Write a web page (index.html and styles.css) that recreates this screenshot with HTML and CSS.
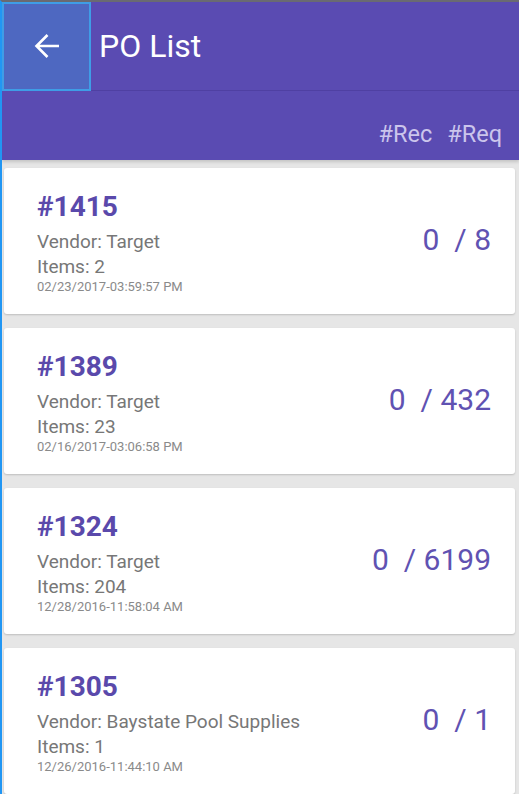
FILE: index.html
```html
<!DOCTYPE html>
<html lang="en">
<head>
    <meta charset="UTF-8">
    <meta name="viewport" content="width=device-width, initial-scale=1.0">
    <title>PO List</title>
    <link rel="stylesheet" href="styles.css">
</head>
<body>
    <header class="appbar">
        <div class="toolbar">
            <button class="back-btn" aria-label="Back">
                <svg width="26" height="26" viewBox="0 0 26 26">
                    <path d="M25 13H2.5M13.5 2L2.5 13l11 11" fill="none" stroke="#fff" stroke-width="2.6"/>
                </svg>
            </button>
            <h1 class="title">PO List</h1>
        </div>
        <div class="columns">
            <span>#Rec</span>
            <span>#Req</span>
        </div>
    </header>

    <main class="po-list">
        <div class="po-card">
            <div class="po-info">
                <div class="po-num">#1415</div>
                <div class="po-line">Vendor: Target</div>
                <div class="po-line">Items: 2</div>
                <div class="po-date">02/23/2017-03:59:57 PM</div>
            </div>
            <div class="po-count">0 &nbsp;/ 8</div>
        </div>
        <div class="po-card">
            <div class="po-info">
                <div class="po-num">#1389</div>
                <div class="po-line">Vendor: Target</div>
                <div class="po-line">Items: 23</div>
                <div class="po-date">02/16/2017-03:06:58 PM</div>
            </div>
            <div class="po-count">0 &nbsp;/ 432</div>
        </div>
        <div class="po-card">
            <div class="po-info">
                <div class="po-num">#1324</div>
                <div class="po-line">Vendor: Target</div>
                <div class="po-line">Items: 204</div>
                <div class="po-date">12/28/2016-11:58:04 AM</div>
            </div>
            <div class="po-count">0 &nbsp;/ 6199</div>
        </div>
        <div class="po-card">
            <div class="po-info">
                <div class="po-num">#1305</div>
                <div class="po-line">Vendor: Baystate Pool Supplies</div>
                <div class="po-line">Items: 1</div>
                <div class="po-date">12/26/2016-11:44:10 AM</div>
            </div>
            <div class="po-count">0 &nbsp;/ 1</div>
        </div>
    </main>
</body>
</html>
```

FILE: styles.css
```css
html, body {
    height: 100%;
}
body {
    margin: 0;
    font-family: Roboto, "Liberation Sans", sans-serif;
    background-color: #e6e6e6;
    border-left: 2px solid #2196f3;
    border-top: 2px solid #6a6a72;
    box-sizing: border-box;
    overflow: hidden;
}
.appbar {
    background-color: #5a4bb2;
}
.toolbar {
    display: flex;
    align-items: center;
    height: 89px;
    border-bottom: 1px solid #5041a4;
    box-sizing: border-box;
}
.back-btn {
    width: 89px;
    height: 89px;
    margin: 0;
    padding: 0;
    display: flex;
    align-items: center;
    justify-content: center;
    background-color: #4e68c1;
    border: 2px solid #3f9de6;
    box-sizing: border-box;
    cursor: pointer;
}
.title {
    margin: 0 0 0 8px;
    font-size: 32px;
    font-weight: 400;
    color: #fff;
}
.columns {
    height: 69px;
    display: flex;
    justify-content: flex-end;
    align-items: flex-end;
    gap: 15px;
    padding: 0 17px 12px 0;
    box-sizing: border-box;
    font-size: 23.5px;
    line-height: 28px;
    color: #cbc5ec;
    box-shadow: 0 2px 3px rgba(0, 0, 0, 0.15);
}
.po-list {
    display: flex;
    flex-direction: column;
    gap: 14px;
    padding: 8px 4px 0 2px;
}
.po-card {
    display: flex;
    align-items: center;
    justify-content: space-between;
    background-color: #fff;
    border-radius: 3px;
    box-shadow: 0 1px 2px rgba(0, 0, 0, 0.18);
    padding: 23px 24px 19px 33px;
    height: 146px;
    box-sizing: border-box;
}
.po-num {
    font-size: 28px;
    font-weight: 700;
    line-height: 32px;
    color: #5a49ab;
    margin-bottom: 6px;
}
.po-line {
    font-size: 19px;
    line-height: 25px;
    color: #777;
}
.po-date {
    font-size: 13px;
    line-height: 16px;
    color: #8a8a8a;
}
.po-count {
    font-size: 30px;
    color: #6052b2;
    margin-bottom: 8px;
    white-space: nowrap;
}
```
